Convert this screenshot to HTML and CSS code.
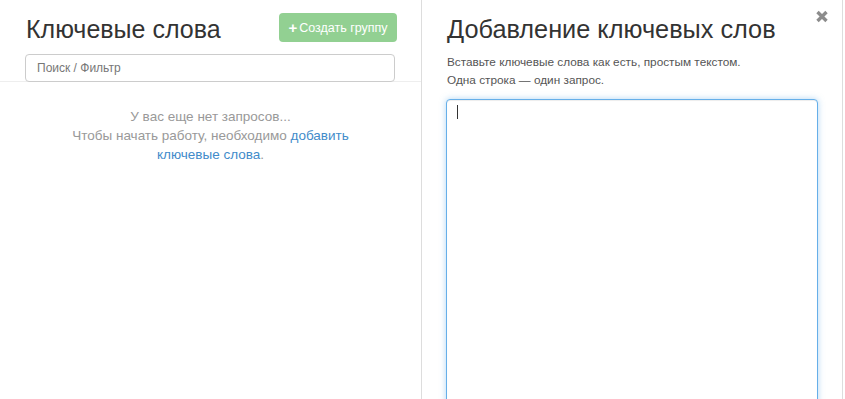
FILE: index.html
```html
<!DOCTYPE html>
<html>
<head>
    <meta charset="utf-8">
    <link rel="stylesheet" href="styles.css">
</head>
<body>
    <div class="workspace">
        <div class="keywords-panel">
            <div class="panel-head">
                <div class="head-row">
                    <h2 class="panel-title">Ключевые слова</h2>
                    <button class="btn-create" disabled><span class="plus">+</span>Создать группу</button>
                </div>
                <input type="text" class="filter-input" placeholder="Поиск / Фильтр">
            </div>
            <div class="empty-state">
                <p>У вас еще нет запросов...</p>
                <p>Чтобы начать работу, необходимо <a href="#" class="link">добавить</a></p>
                <p><a href="#" class="link">ключевые слова</a>.</p>
            </div>
        </div>
        <div class="add-panel">
            <button class="close-btn" title="Закрыть">
                <svg width="12" height="13" viewBox="0 0 12 13">
                    <path d="M1.5 2 L10.5 11 M10.5 2 L1.5 11" stroke="#8c8c8c" stroke-width="3.4" stroke-linecap="butt"/>
                </svg>
            </button>
            <h2 class="add-title">Добавление ключевых слов</h2>
            <p class="add-hint">Вставьте ключевые слова как есть, простым текстом.<br>Одна строка — один запрос.</p>
            <div class="input-wrap">
                <textarea class="keywords-input" autofocus></textarea>
                <span class="caret"></span>
            </div>
        </div>
    </div>
</body>
</html>
```

FILE: styles.css
```css
* {
    box-sizing: border-box;
    margin: 0;
    padding: 0;
}

body {
    font-family: "Liberation Sans", Arial, sans-serif;
    height: 100vh;
    overflow: hidden;
    background: #fff;
    color: #333;
}

.workspace {
    display: flex;
    height: 100%;
}

.keywords-panel {
    width: 421px;
    flex-shrink: 0;
}

.panel-head {
    padding: 13px 25px 0 26px;
    border-bottom: 1px solid #eee;
}

.head-row {
    display: flex;
    justify-content: space-between;
    align-items: flex-start;
}

.panel-title {
    font-size: 25px;
    font-weight: normal;
    line-height: 32px;
    color: #333;
}

.btn-create {
    height: 29px;
    width: 118px;
    border: none;
    border-radius: 4px;
    background: #92d092;
    color: #fff;
    font-family: inherit;
    font-size: 12.5px;
    margin-right: -1px;
    display: flex;
    align-items: center;
    justify-content: center;
    gap: 2px;
}

.plus {
    font-weight: bold;
    font-size: 15px;
}

.filter-input {
    display: block;
    width: 370px;
    height: 28px;
    margin-top: 9px;
    margin-left: -1px;
    margin-bottom: -1px;
    border: 1px solid #ccc;
    border-radius: 4px;
    padding: 0 11px;
    font-family: inherit;
    font-size: 12px;
    color: #555;
    outline: none;
}

.filter-input::placeholder {
    color: #777;
}

.empty-state {
    text-align: center;
    font-size: 13.5px;
    line-height: 19px;
    color: #999;
    padding: 25px 40px 0;
}

.link {
    color: #428bca;
    text-decoration: none;
}

.add-panel {
    position: relative;
    width: 422px;
    flex-shrink: 0;
    border-left: 1px solid #ddd;
    border-right: 1px solid #ddd;
    padding: 13px 24px 0 25px;
    display: flex;
    flex-direction: column;
    overflow: hidden;
}

.close-btn {
    position: absolute;
    top: 10px;
    right: 14px;
    border: none;
    background: none;
    cursor: pointer;
    line-height: 0;
}

.add-title {
    font-size: 25.3px;
    font-weight: normal;
    line-height: 32px;
    color: #333;
}

.add-hint {
    font-size: 11.8px;
    line-height: 18px;
    color: #555;
    margin-top: 8px;
}

.input-wrap {
    position: relative;
    flex: 1;
    margin-top: 10px;
    margin-left: -1px;
    margin-bottom: -20px;
    display: flex;
}

.keywords-input {
    flex: 1;
    width: 371px;
    border: 1px solid #66afe9;
    border-radius: 4px;
    box-shadow: inset 0 1px 1px rgba(0, 0, 0, .075), 0 0 6px rgba(102, 175, 233, .5);
    outline: none;
    resize: none;
    padding: 6px 10px;
    font-family: inherit;
    font-size: 12px;
    caret-color: transparent;
}

.caret {
    position: absolute;
    top: 6px;
    left: 11px;
    width: 1px;
    height: 14px;
    background: #333;
}
```
